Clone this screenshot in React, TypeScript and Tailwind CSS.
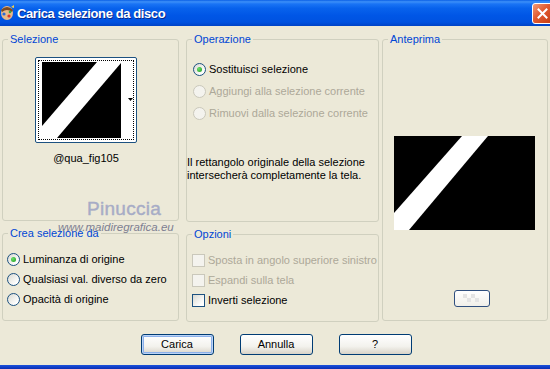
import type { ReactNode } from 'react'

function GroupBox({ title, className, children }: { title: string; className: string; children?: ReactNode }) {
  return (
    <fieldset className={`rounded-[3px] border border-[#d0d0bf] ${className}`}>
      <legend className="ml-[5px] px-[2px] leading-[13px] text-[#0046d5]">{title}</legend>
      {children}
    </fieldset>
  )
}

function Radio({ checked, disabled }: { checked?: boolean; disabled?: boolean }) {
  return (
    <span
      className={`flex h-[13px] w-[13px] shrink-0 items-center justify-center rounded-full border ${
        disabled ? 'border-[#cac8bb] bg-[#f4f3ee]' : 'border-[#1c5180] bg-[linear-gradient(135deg,#d9d9d1,#ffffff_80%)]'
      }`}
    >
      {checked && <span className="h-[5px] w-[5px] rounded-full bg-[radial-gradient(circle_at_35%_35%,#6be06b,#1a9a1a)]" />}
    </span>
  )
}

function Check({ disabled }: { disabled?: boolean }) {
  return (
    <span
      className={`h-[13px] w-[13px] shrink-0 border ${
        disabled ? 'border-[#cac8bb] bg-[#f4f3ee]' : 'border-[#1c5180] bg-[linear-gradient(135deg,#d9d9d1,#ffffff_80%)]'
      }`}
    />
  )
}

function Row({ control, label, disabled }: { control: ReactNode; label: string; disabled?: boolean }) {
  return (
    <div className="flex h-[13px] items-center gap-[3px]">
      {control}
      <span className={`whitespace-nowrap ${disabled ? 'text-[#aca899]' : 'text-black'}`}>{label}</span>
    </div>
  )
}

function Button({ label, isDefault }: { label: string; isDefault?: boolean }) {
  return (
    <button
      className={`h-[21px] w-[73px] rounded-[3px] border border-[#003c74] bg-[linear-gradient(to_bottom,#ffffff,#f3f2ed_60%,#d8d3c8)] text-[11px] text-black ${
        isDefault ? 'shadow-[inset_0_0_0_1px_#bcd4f6,inset_0_0_0_2px_#8bb0ea]' : ''
      }`}
    >
      {label}
    </button>
  )
}

export default function App() {
  return (
    <div className="relative flex h-[369px] w-[550px] flex-col overflow-hidden bg-[#ece9d8] font-['Liberation_Sans',Arial,sans-serif] text-[11px] leading-[13px]">
      {/* Title bar */}
      <div className="flex h-[26px] shrink-0 items-center overflow-hidden bg-[linear-gradient(to_bottom,#0a5fe6_0%,#3d90f8_7%,#1a74f5_15%,#0862ec_32%,#0056e6_60%,#0052e0_85%,#0043c6_100%)]">
        <svg width="15" height="16" viewBox="0 0 15 16" className="ml-[0px] shrink-0">
          <ellipse cx="7" cy="8" rx="6" ry="7" fill="#e9b98a" />
          <path d="M1 5 Q7 -1 13 5 L12 7 Q7 3 2 7 Z" fill="#7a4a22" />
          <circle cx="4" cy="9" r="1.6" fill="#2a6bd8" />
          <circle cx="9" cy="11" r="1.6" fill="#d83a2a" />
          <circle cx="10" cy="7" r="1.3" fill="#39a845" />
          <path d="M11 2 L14 0 L14 3 Z" fill="#f2d14a" />
        </svg>
        <span className="ml-[2px] whitespace-nowrap text-[13px] font-bold tracking-[-0.4px] text-white [text-shadow:1px_1px_0_#0b2a8c]">
          Carica selezione da disco
        </span>
        <div className="mr-[-3px] ml-auto flex h-[21px] w-[21px] shrink-0 items-center justify-center rounded-[3px] border border-white bg-[linear-gradient(135deg,#f29a78,#e15a30_45%,#c53d12)]">
          <svg width="11" height="11" viewBox="0 0 11 11">
            <path d="M1.5 1.5 L9.5 9.5 M9.5 1.5 L1.5 9.5" stroke="#ffffff" strokeWidth="2" strokeLinecap="square" />
          </svg>
        </div>
      </div>

      {/* Body */}
      <div className="flex flex-1 flex-col">
        <div className="flex pt-[7px] pl-[2px]">
          {/* Left column */}
          <div className="flex w-[177px] flex-col gap-[6px]">
            <GroupBox title="Selezione" className="h-[188px]">
              <div className="mt-[11px] ml-[32px] flex w-[102px] flex-col items-center">
                <div className="h-[86px] w-[102px] rounded-[2px] border border-[#1c5180] bg-white p-[2px]">
                  <div className="flex h-full w-full items-start border border-dotted border-black">
                    <svg width="79" height="76" viewBox="0 0 79 76" className="mt-[1px] ml-[3px] shrink-0">
                      <rect width="79" height="76" fill="#000" />
                      <polygon points="55,0 79,0 79,1 15,76 0,76 0,64" fill="#fff" />
                    </svg>
                    <svg width="5" height="3" viewBox="0 0 5 3" className="mt-[37px] ml-[7px] shrink-0">
                      <polygon points="0,0 5,0 2.5,3" fill="#000" />
                    </svg>
                  </div>
                </div>
                <span className="mt-[9px]">@qua_fig105</span>
              </div>
            </GroupBox>
            <GroupBox title="Crea selezione da" className="h-[94px]">
              <div className="mt-[13px] flex flex-col gap-[7px] pl-[4px]">
                <Row control={<Radio checked />} label="Luminanza di origine" />
                <Row control={<Radio />} label="Qualsiasi val. diverso da zero" />
                <Row control={<Radio />} label="Opacità di origine" />
              </div>
            </GroupBox>
          </div>

          {/* Middle column */}
          <div className="ml-[7px] flex w-[193px] flex-col gap-[6px]">
            <GroupBox title="Operazione" className="h-[189px]">
              <div className="mt-[17px] flex flex-col gap-[9px] pl-[6px]">
                <Row control={<Radio checked />} label="Sostituisci selezione" />
                <Row control={<Radio disabled />} label="Aggiungi alla selezione corrente" disabled />
                <Row control={<Radio disabled />} label="Rimuovi dalla selezione corrente" disabled />
              </div>
              <p className="mt-[36px]">
                Il rettangolo originale della selezione
                <br />
                intersecherà completamente la tela.
              </p>
            </GroupBox>
            <GroupBox title="Opzioni" className="h-[94px]">
              <div className="mt-[13px] flex flex-col gap-[7px] pl-[5px]">
                <Row control={<Check disabled />} label="Sposta in angolo superiore sinistro" disabled />
                <Row control={<Check disabled />} label="Espandi sulla tela" disabled />
                <Row control={<Check />} label="Inverti selezione" />
              </div>
            </GroupBox>
          </div>

          {/* Right column */}
          <div className="ml-[3px] w-[166px]">
            <GroupBox title="Anteprima" className="h-[288px]">
              <svg width="141" height="94" viewBox="0 0 141 94" className="mt-[90px] ml-[11px] block">
                <rect width="141" height="94" fill="#000" />
                <polygon points="68,0 94,0 15,94 0,94 0,77" fill="#fff" />
              </svg>
              <div className="mt-[60px] ml-[71px] flex h-[17px] w-[36px] items-center justify-center rounded-[3px] border border-[#2f4f7f] bg-[linear-gradient(to_bottom,#ffffff,#f1f0ea)]">
                <svg width="18" height="9" viewBox="0 0 18 9">
                  <rect x="0" y="0" width="4" height="4" fill="#e4e4e4" />
                  <rect x="8" y="0" width="4" height="4" fill="#e4e4e4" />
                  <rect x="4" y="4" width="4" height="4" fill="#e4e4e4" />
                  <rect x="12" y="4" width="4" height="4" fill="#e4e4e4" />
                </svg>
              </div>
            </GroupBox>
          </div>
        </div>

        {/* Buttons */}
        <div className="mt-[12px] flex justify-center gap-[26px] pl-[2px]">
          <Button label="Carica" isDefault />
          <Button label="Annulla" />
          <Button label="?" />
        </div>
      </div>

      <div className="h-[4px] shrink-0 bg-[linear-gradient(to_bottom,#1b52dc,#0a2eb4)]" />

      {/* Watermark */}
      <span className="pointer-events-none absolute top-[199px] left-[87px] text-[19px] leading-none tracking-[0.3px] text-[#a7acc6] [-webkit-text-stroke:0.4px_#a7acc6]">
        Pinuccia
      </span>
      <span className="pointer-events-none absolute top-[222px] left-[58px] text-[11.5px] leading-none text-[#7e7f92] italic">
        www.maidiregrafica.eu
      </span>
    </div>
  )
}
